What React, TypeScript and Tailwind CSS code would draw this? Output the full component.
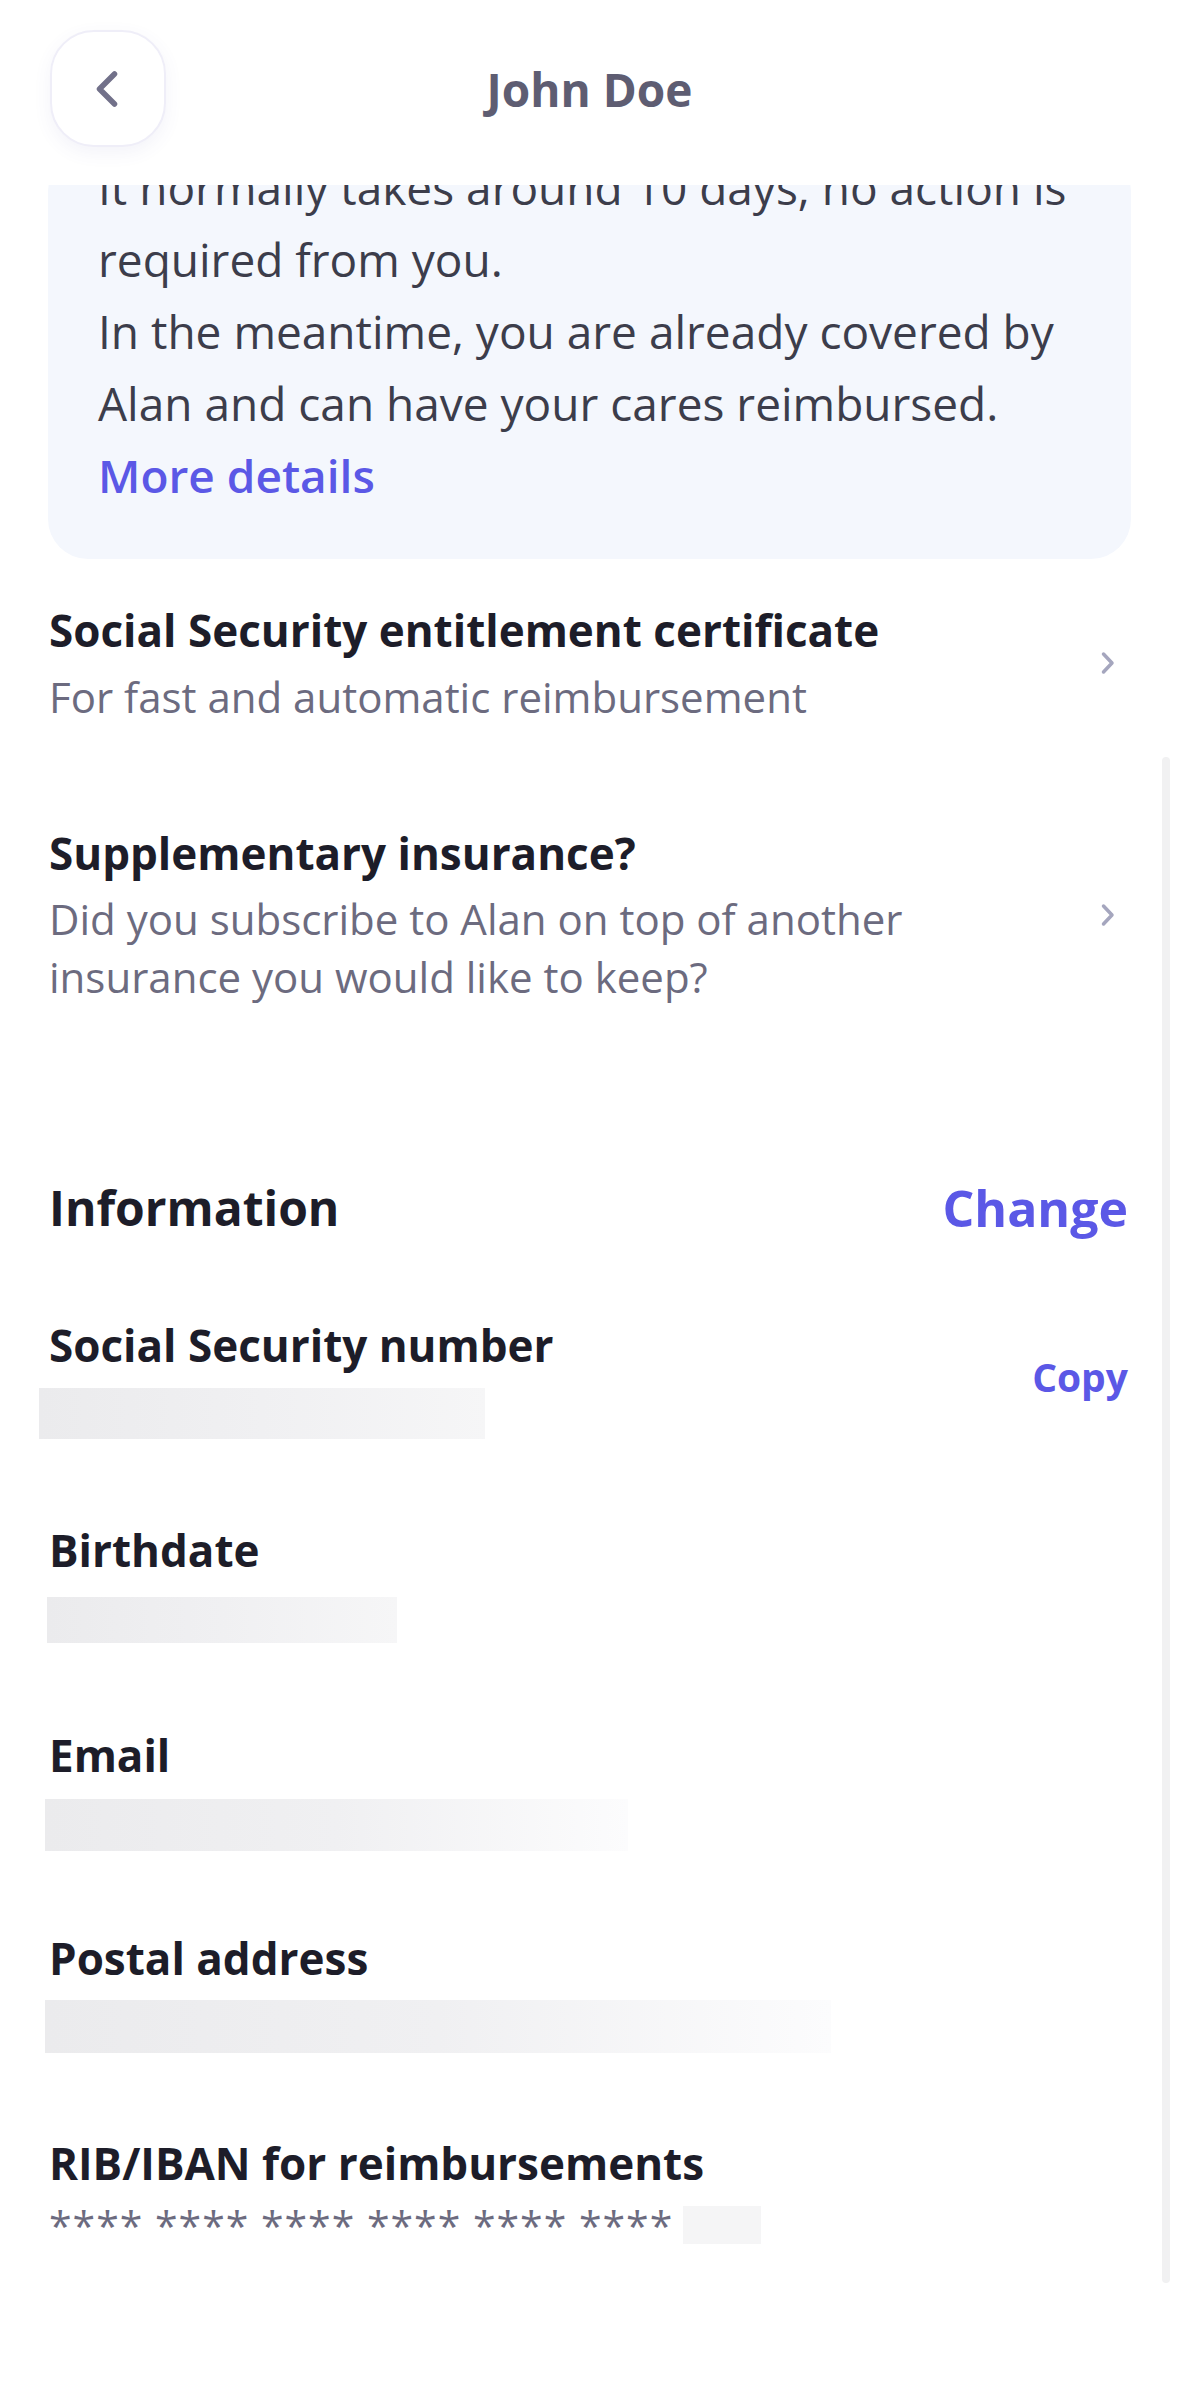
import React from "react";

function BackChevron() {
  return (
    <svg width="22" height="36" viewBox="0 0 22 36" fill="none">
      <path d="M18.5 3 L3.5 18 L18.5 33" stroke="#72718a" strokeWidth="5.5" strokeLinecap="round" strokeLinejoin="round" />
    </svg>
  );
}

function RightChevron() {
  return (
    <svg width="14" height="24" viewBox="0 0 14 24" fill="none">
      <path d="M2.5 3 L11 12 L2.5 21" stroke="#a5a6be" strokeWidth="3.5" strokeLinecap="round" strokeLinejoin="round" />
    </svg>
  );
}

function Bar({ w, h, ml, fade }: { w: string; h: string; ml: string; fade?: boolean }) {
  return (
    <div
      className={
        "bg-linear-to-r from-[#ebebed] via-[#f0f0f2] " +
        (fade ? "to-[#fcfcfd] " : "to-[#f6f6f7] ") +
        w +
        " " +
        h +
        " " +
        ml
      }
    />
  );
}

export default function App() {
  return (
    <div className="relative w-[1179px] h-[2396px] bg-white overflow-hidden font-['Open_Sans',sans-serif]">
      {/* Header */}
      <header className="relative z-10 h-[185px] bg-white grid grid-cols-[116px_1fr_116px] items-start px-[50px] pt-[30px]">
        <button className="w-[116px] h-[117px] rounded-[44px] border-2 border-[#efeef8] bg-white shadow-[0_6px_18px_rgba(90,90,170,0.07)] flex items-center justify-center pr-[3px]">
          <BackChevron />
        </button>
        <div className="h-[117px] flex items-center justify-center text-[46px] font-bold text-[#5e5d72] leading-none">
          John Doe
        </div>
        <div />
      </header>

      <main className="relative">
        {/* Info card */}
        <div className="mx-[48px] -mt-[34px] rounded-[40px] bg-[#f4f7fd] pl-[50px] pr-[40px] pb-[48px] text-[46px] leading-[72px] text-[#3c3d4b]">
          <div className="whitespace-nowrap">It normally takes around 10 days, no action is</div>
          <div className="whitespace-nowrap">required from you.</div>
          <div className="whitespace-nowrap">In the meantime, you are already covered by</div>
          <div className="whitespace-nowrap">Alan and can have your cares reimbursed.</div>
          <div className="whitespace-nowrap font-semibold text-[#5b58e6]">More details</div>
        </div>

        {/* Row 1 */}
        <div className="mt-[41px] flex items-center justify-between pl-[49px] pr-[64px]">
          <div>
            <div className="text-[44px] leading-[60px] font-bold text-[#1d1d29] whitespace-nowrap">
              Social Security entitlement certificate
            </div>
            <div className="mt-[8px] text-[42px] leading-[58px] text-[#6c6b7f] whitespace-nowrap">
              For fast and automatic reimbursement
            </div>
          </div>
          <RightChevron />
        </div>

        {/* Row 2 */}
        <div className="mt-[97px] flex items-center justify-between pl-[49px] pr-[64px]">
          <div>
            <div className="text-[44px] leading-[60px] font-bold text-[#1d1d29] whitespace-nowrap">
              Supplementary insurance?
            </div>
            <div className="mt-[7px] text-[42px] leading-[58px] text-[#6c6b7f]">
              <div className="whitespace-nowrap">Did you subscribe to Alan on top of another</div>
              <div className="whitespace-nowrap">insurance you would like to keep?</div>
            </div>
          </div>
          <RightChevron />
        </div>

        {/* Information header */}
        <div className="mt-[170px] flex items-center justify-between pl-[49px] pr-[51px] leading-[64px] font-bold">
          <div className="text-[48px] text-[#1d1d29]">Information</div>
          <div className="text-[50px] text-[#5b58e6]">Change</div>
        </div>

        {/* SSN */}
        <div className="mt-[75px] flex items-center justify-between pl-[49px] pr-[51px]">
          <div>
            <div className="text-[44px] leading-[60px] font-bold text-[#1d1d29]">Social Security number</div>
            <div className="mt-[13px]">
              <Bar w="w-[446px]" h="h-[51px]" ml="-ml-[10px]" />
            </div>
          </div>
          <div className="text-[39px] leading-[52px] font-bold text-[#5b58e6]">Copy</div>
        </div>

        {/* Birthdate */}
        <div className="mt-[81px] pl-[49px]">
          <div className="text-[44px] leading-[60px] font-bold text-[#1d1d29]">Birthdate</div>
          <div className="mt-[17px]">
            <Bar w="w-[350px]" h="h-[46px]" ml="-ml-[2px]" />
          </div>
        </div>

        {/* Email */}
        <div className="mt-[82px] pl-[49px]">
          <div className="text-[44px] leading-[60px] font-bold text-[#1d1d29]">Email</div>
          <div className="mt-[14px]">
            <Bar w="w-[583px]" h="h-[52px]" ml="-ml-[4px]" fade />
          </div>
        </div>

        {/* Postal address */}
        <div className="mt-[77px] pl-[49px]">
          <div className="text-[44px] leading-[60px] font-bold text-[#1d1d29]">Postal address</div>
          <div className="mt-[12px]">
            <Bar w="w-[786px]" h="h-[53px]" ml="-ml-[4px]" fade />
          </div>
        </div>

        {/* RIB */}
        <div className="mt-[80px] pl-[49px]">
          <div className="text-[44px] leading-[60px] font-bold text-[#1d1d29]">RIB/IBAN for reimbursements</div>
          <div className="mt-[3px] flex items-center text-[41px] leading-[58px] text-[#6c6b7f]">
            <span className="whitespace-nowrap tracking-[1px]">**** **** **** **** **** ****</span>
            <span className="ml-[10px] w-[78px] h-[38px] bg-[#f5f5f6]" />
          </div>
        </div>
      </main>

      {/* Scrollbar */}
      <div className="absolute right-[9px] top-[757px] w-[8px] h-[1526px] rounded-full bg-[#f1f1f2]" />
    </div>
  );
}
